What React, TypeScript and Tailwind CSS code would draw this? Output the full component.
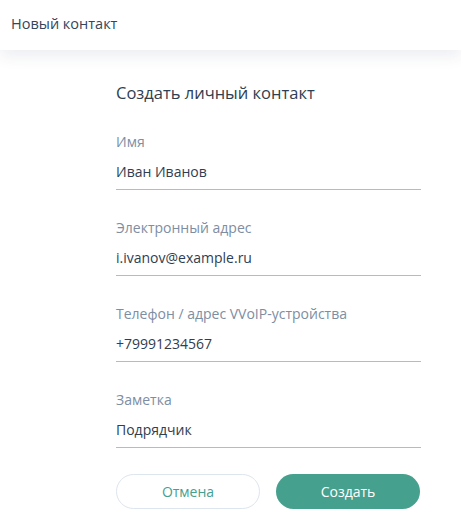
import { useState } from 'react';

interface FieldProps {
  label: string;
  value: string;
  onChange: (v: string) => void;
}

function Field({ label, value, onChange }: FieldProps) {
  return (
    <div className="flex flex-col">
      <label className="text-[14px] leading-[19px] text-[#7d8ea3]">{label}</label>
      <input
        className="mt-[11px] pb-[7px] text-[14px] leading-[20px] text-[#2f3e50] border-b border-[#aabdd3] outline-none bg-transparent"
        value={value}
        onChange={(e) => onChange(e.target.value)}
      />
    </div>
  );
}

export default function App() {
  const [name, setName] = useState('Иван Иванов');
  const [email, setEmail] = useState('i.ivanov@example.ru');
  const [phone, setPhone] = useState('+79991234567');
  const [note, setNote] = useState('Подрядчик');

  return (
    <div
      className="w-[461px] h-[521px] bg-white overflow-hidden"
      style={{ fontFamily: '"Open Sans", "Liberation Sans", sans-serif' }}
    >
      {/* Header */}
      <div className="relative z-10 h-[50px] bg-white pl-[11px] pt-[11px] shadow-[0_6px_16px_rgba(40,60,100,0.09)]">
        <span className="text-[14.5px] leading-[20px] text-[#34465a]">Новый контакт</span>
      </div>

      {/* Form */}
      <div className="pl-[116px] pt-[31px]">
        <div className="w-[305px] flex flex-col">
          <h2 className="text-[16.5px] leading-[24px] font-medium text-[#2f3e50]">Создать личный контакт</h2>
          <div className="mt-[27px] flex flex-col gap-[28px]">
            <Field label="Имя" value={name} onChange={setName} />
            <Field label="Электронный адрес" value={email} onChange={setEmail} />
            <Field label="Телефон / адрес VVoIP-устройства" value={phone} onChange={setPhone} />
            <Field label="Заметка" value={note} onChange={setNote} />
          </div>
          <div className="mt-[26px] flex gap-4">
            <button className="w-[144px] h-[35px] rounded-full border border-[#dde5ee] bg-white text-[14px] text-[#46a08e]">
              Отмена
            </button>
            <button className="w-[144px] h-[35px] rounded-full bg-[#46a08e] text-[14px] text-white">
              Создать
            </button>
          </div>
        </div>
      </div>
    </div>
  );
}
